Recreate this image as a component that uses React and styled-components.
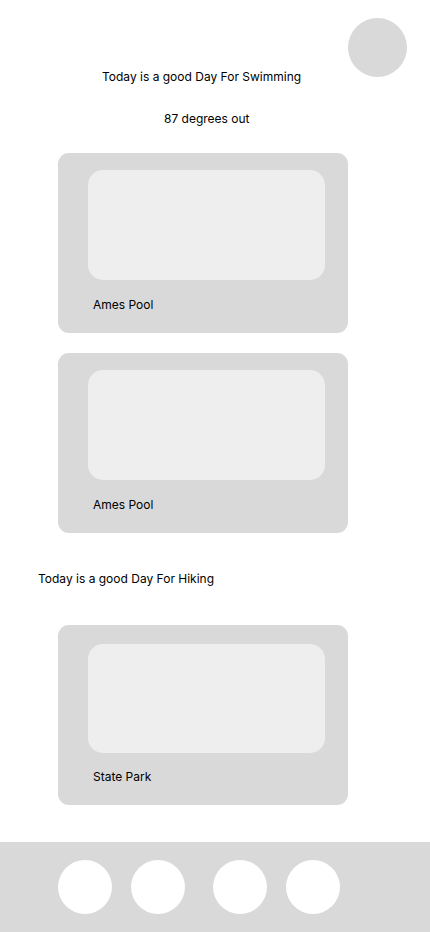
import React from 'react';
import styled, { createGlobalStyle } from 'styled-components';

const GlobalStyle = createGlobalStyle`
  html, body {
    margin: 0;
    padding: 0;
    background: #ffffff;
    overflow: hidden;
  }
  body {
    font-family: Inter, "Noto Sans", sans-serif;
    color: #000000;
  }
`;

const Page = styled.div`
  width: 430px;
  height: 932px;
  display: flex;
  flex-direction: column;
  background: #ffffff;
`;

const Header = styled.header`
  display: grid;
  grid-template-areas: 'stack';
  grid-template-rows: 67px;
  padding: 18px 23px 0 0;
`;

const Avatar = styled.div`
  grid-area: stack;
  justify-self: end;
  align-self: start;
  width: 59px;
  height: 59px;
  border-radius: 50%;
  background: #d9d9d9;
`;

const Title = styled.div`
  grid-area: stack;
  justify-self: start;
  align-self: end;
  font-size: 12px;
  line-height: 16px;
  margin-left: 102px;
`;

const Line = styled.div`
  font-size: 12px;
  line-height: 16px;
  margin-top: ${p => p.$top}px;
  padding-left: ${p => p.$left}px;
`;

const CardList = styled.div`
  display: flex;
  flex-direction: column;
  gap: 20px;
  padding-left: 58px;
  margin-top: ${p => p.$top}px;
`;

const Card = styled.div`
  width: 290px;
  height: 180px;
  box-sizing: border-box;
  padding: ${p => (p.$tall ? 19 : 17)}px 23px 20px 30px;
  border-radius: 11px;
  background: #d9d9d9;
  display: flex;
  flex-direction: column;
`;

const Thumb = styled.div`
  height: ${p => (p.$tall ? 109 : 110)}px;
  border-radius: 15px;
  background: #eeeeee;
`;

const Label = styled.div`
  margin-top: ${p => (p.$tall ? 16 : 17)}px;
  padding-left: 5px;
  font-size: 12px;
  line-height: 16px;
`;

const NavBar = styled.nav`
  margin-top: 37px;
  height: 90px;
  box-sizing: border-box;
  padding: 18px 0 0 58px;
  background: #d9d9d9;
  display: flex;
  align-items: flex-start;
`;

const NavDot = styled.div`
  width: 54px;
  height: 54px;
  border-radius: 50%;
  background: #ffffff;
  margin-left: ${p => p.$gap || 0}px;
`;

function PlaceCard({ name, tall }) {
  return (
    <Card $tall={tall}>
      <Thumb $tall={tall} />
      <Label $tall={tall}>{name}</Label>
    </Card>
  );
}

export default function App() {
  return (
    <Page>
      <GlobalStyle />
      <Header>
        <Avatar />
        <Title>Today is a good Day For Swimming</Title>
      </Header>
      <Line $top={26} $left={164}>87 degrees out</Line>
      <CardList $top={26}>
        <PlaceCard name="Ames Pool" />
        <PlaceCard name="Ames Pool" />
      </CardList>
      <Line $top={38} $left={38}>Today is a good Day For Hiking</Line>
      <CardList $top={38}>
        <PlaceCard name="State Park" tall />
      </CardList>
      <NavBar>
        <NavDot />
        <NavDot $gap={19} />
        <NavDot $gap={28} />
        <NavDot $gap={19} />
      </NavBar>
    </Page>
  );
}
